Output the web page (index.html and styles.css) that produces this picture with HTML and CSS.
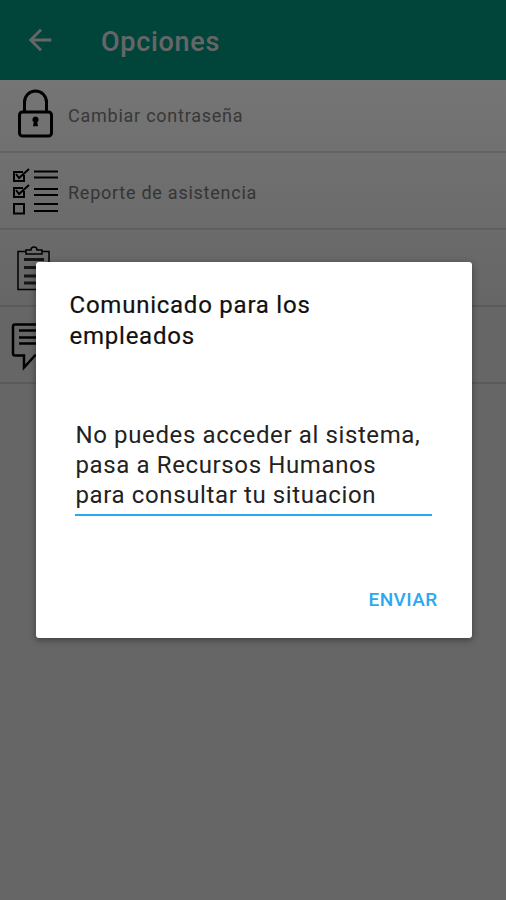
FILE: index.html
```html
<!DOCTYPE html>
<html lang="es">
<head>
<meta charset="utf-8">
<title>Opciones</title>
<link rel="stylesheet" href="styles.css">
</head>
<body>
<div class="screen">
  <header class="appbar">
    <svg class="back" viewBox="0 0 24 24" width="34" height="34"><path d="M20 11H7.830l5.590-5.590L12 4l-8 8 8 8 1.410-1.410L7.830 13H20z"/></svg>
    <h1 class="title">Opciones</h1>
  </header>
  <ul class="list">
    <li class="row">
      <svg class="icon" viewBox="0 0 56 56" width="56" height="56" fill="none" stroke="#000" stroke-width="3">
        <rect x="11.500" y="26" width="32" height="24" rx="3"/>
        <path d="M16.500 26v-10a11 11 0 0 1 22 0v10"/>
        <path d="M27.500 30.500a3.200 3.200 0 0 1 1.800 5.800l.7 4h-5l.7-4a3.200 3.200 0 0 1 1.800-5.800z" fill="#000" stroke="none"/>
      </svg>
      <span class="label">Cambiar contraseña</span>
    </li>
    <li class="row">
      <svg class="icon" viewBox="0 0 56 56" width="56" height="56" fill="none" stroke="#000" stroke-width="2">
        <path d="M15 9H6v9h10v-6"/><path d="M8 11l3 4 10-9"/>
        <path d="M15 25H6v9h10v-6"/><path d="M8 27l3 4 10-9"/>
        <rect x="6" y="41" width="10" height="9.500"/>
        <path d="M26 8.500h24M26 14.500h24M26 26h24M26 32h24M26 41h24M26 48h24"/>
      </svg>
      <span class="label">Reporte de asistencia</span>
    </li>
    <li class="row">
      <svg class="icon" viewBox="0 0 56 56" width="56" height="56" fill="none" stroke="#000" stroke-width="1.500">
        <path d="M18 11.500h-8v38h31v-38h-7"/>
        <path d="M18 14v-4h5a3 3 0 0 1 6 0h5v4z"/>
        <path d="M16 19.500h20M16 27.500h20M16 36h20M16 43h20" stroke="#333" stroke-width="3"/>
      </svg>
      <span class="label"></span>
    </li>
    <li class="row">
      <svg class="icon" viewBox="0 0 56 56" width="56" height="56" fill="none" stroke="#000" stroke-width="2.500">
        <path d="M7 7.500h40a2 2 0 0 1 2 2v27a2 2 0 0 1-2 2H27l-11 12v-12H7a2 2 0 0 1-2-2v-27a2 2 0 0 1 2-2z"/>
        <path d="M11 13.500h32M11 20.500h32M11 26.500h32"/>
      </svg>
      <span class="label"></span>
    </li>
  </ul>
  <div class="scrim">
    <section class="dialog">
      <h2 class="dialog-title">Comunicado para los empleados</h2>
      <div class="field">No puedes acceder al sistema,<br>pasa a Recursos Humanos<br>para consultar tu situacion</div>
      <div class="actions"><span class="send">ENVIAR</span></div>
    </section>
  </div>
</div>
</body>
</html>
```

FILE: styles.css
```css
* { box-sizing: border-box; }
html, body { margin: 0; padding: 0; }
body { font-family: Roboto, "Liberation Sans", sans-serif; background: #fff; }
.screen { position: relative; width: 506px; height: 900px; overflow: hidden; }
.appbar { position: relative; height: 80px; background: #00aa91; display: flex; align-items: center; padding-left: 23px; gap: 44px; }
.back { fill: #fff; flex: none; }
.title { margin: 3px 0 0; font-size: 27px; font-weight: 500; color: #fff; letter-spacing: .7px; }
.list { list-style: none; margin: -4px 0 0; padding: 0; }
.row { height: 77px; display: flex; align-items: center; padding-left: 8px; gap: 4px; border-bottom: 2px solid #e2e2e2; }
.icon { flex: none; }
.label { margin-top: 3px; font-size: 18px; color: #7c7c7c; letter-spacing: .75px; }
.scrim { position: absolute; inset: 0; background: linear-gradient(rgba(0,0,0,.6) 80px, rgba(0,0,0,.54) 80px, rgba(0,0,0,.6) 300px); display: flex; justify-content: center; padding: 262px 0 0 1px; align-items: flex-start; }
.dialog { width: 436px; height: 376px; background: #fff; border-radius: 3px; box-shadow: 0 2px 7px rgba(0,0,0,.4); padding: 28px 34px 0 34px; display: flex; flex-direction: column; }
.dialog-title { margin: 0; font-size: 24px; line-height: 31px; font-weight: 400; color: #111; width: 320px; letter-spacing: .76px; -webkit-text-stroke: .2px #111; }
.field { margin: 68px 6px 0 5px; padding: 0 0 4px 1px; font-size: 24px; line-height: 30px; color: #222; border-bottom: 2px solid #29a9ec; letter-spacing: .62px; width: 357px; }
.actions { display: flex; justify-content: flex-end; margin-top: 72px; }
.send { font-size: 19px; font-weight: 500; color: #2aa9f0; letter-spacing: .4px; }
```
